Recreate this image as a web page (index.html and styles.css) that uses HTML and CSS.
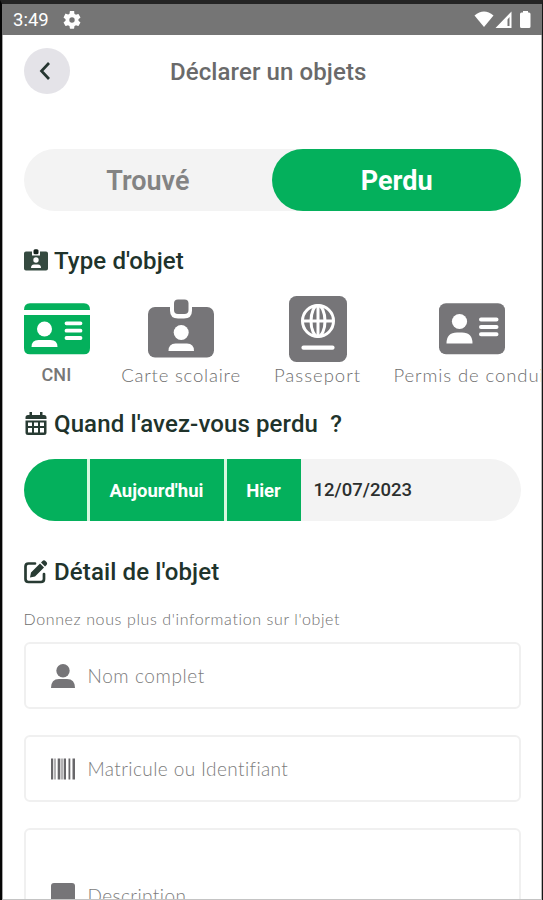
FILE: index.html
```html
<!DOCTYPE html>
<html lang="fr">
<head>
<meta charset="utf-8">
<title>Déclarer un objets</title>
<link rel="stylesheet" href="styles.css">
</head>
<body>
<div class="status">
  <span class="clock">3:49</span>
  <svg class="gear" viewBox="2 2 20 20"><path fill="#fff" fill-rule="evenodd" d="M19.14 12.94c.04-.3.06-.61.06-.94s-.02-.64-.07-.94l2.03-1.58a.49.49 0 0 0 .12-.61l-1.92-3.32a.49.49 0 0 0-.59-.22l-2.39.96a7 7 0 0 0-1.62-.94l-.36-2.54A.48.48 0 0 0 13.92 2h-3.84a.48.48 0 0 0-.47.41l-.36 2.54c-.59.24-1.13.57-1.62.94l-2.39-.96a.48.48 0 0 0-.59.22L2.74 8.87a.48.48 0 0 0 .12.61l2.03 1.58c-.05.3-.09.63-.09.94s.02.64.07.94l-2.03 1.58a.49.49 0 0 0-.12.61l1.92 3.32c.12.22.37.29.59.22l2.39-.96c.5.38 1.03.7 1.62.94l.36 2.54c.05.24.24.41.48.41h3.84c.24 0 .44-.17.47-.41l.36-2.54a7 7 0 0 0 1.62-.94l2.39.96c.22.08.47 0 .59-.22l1.92-3.32a.48.48 0 0 0-.12-.61zM12 15a3 3 0 1 1 0-6 3 3 0 0 1 0 6z"/></svg>
  <svg class="signals" viewBox="0 0 60 20"><g fill="#fff"><path d="M.5 5.500Q10 -2.500 19.500 5.500L10 17Z"/><path fill-rule="evenodd" d="M21.500 18 37.500 1.500V18ZM33.500 9.500V16H35.500V7Z"/><path d="M49 2.500V1h5v1.500h1q1.500 0 1.500 1.500v12.500q0 1.500-1.500 1.500h-7.500q-1.500 0-1.500-1.500V4q0-1.500 1.500-1.500Z"/></g></svg>
</div>
<main class="screen">
  <header class="header">
    <button class="back" aria-label="Retour"><svg viewBox="0 0 12 20"><path d="M10 2 2.500 10 10 18" fill="none" stroke="#253530" stroke-width="2.700"/></svg></button>
    <h1 class="title">Déclarer un objets</h1>
  </header>
  <div class="tabs"><div class="tab">Trouvé</div><div class="tab active">Perdu</div></div>

  <h2 class="heading first">
    <svg viewBox="0 0 24 22"><path fill="#354a40" d="M2 1.500H8V5.500H16V1.500H22Q24 1.500 24 3.500V18.500Q24 20.500 22 20.500H2Q0 20.500 0 18.500V3.500Q0 1.500 2 1.500Z"/><rect x="9.500" y="-.8" width="5" height="5" rx="1.500" fill="#15231c"/><circle cx="12" cy="10" r="2.700" fill="#fff"/><path fill="#fff" d="M7 18Q7 14.500 10 14.500H14Q17 14.500 17 18Z"/></svg>
    <span class="h-type">Type d'objet</span>
  </h2>
  <div class="types">
    <div class="type cni">
      <svg width="66" height="66" viewBox="0 0 66 66"><path fill="#04b05c" d="M0 14Q0 7.300 6 7.300H60Q66 7.300 66 14Z"/><path fill="#04b05c" d="M0 19H66V52Q66 58.300 60 58.300H6Q0 58.300 0 52Z"/><circle cx="20.500" cy="33" r="7.500" fill="#fff"/><path fill="#fff" d="M7.500 51Q7.500 44 14.500 44H26.500Q33.500 44 33.500 51Z"/><path stroke="#fff" stroke-width="3.800" stroke-linecap="round" d="M42.500 27.300H56.500M42.500 34.700H56.500M42.500 42H56.500"/></svg>
      <span class="label bold">CNI</span>
    </div>
    <div class="type carte">
      <svg width="66" height="66" viewBox="0 0 66 66"><rect y="11" width="66" height="50.500" rx="7" fill="#767578"/><path fill="#fff" d="M22 10H44V14.500Q44 22.500 36 22.500H30Q22 22.500 22 14.500Z"/><rect x="26" y="3.500" width="14.500" height="14.500" rx="4" fill="#767578"/><circle cx="33.200" cy="36.500" r="7.500" fill="#fff"/><path fill="#fff" d="M20.500 55Q20.500 47.500 27.500 47.500H39Q46 47.500 46 55Z"/></svg>
      <span class="label">Carte scolaire</span>
    </div>
    <div class="type passeport">
      <svg width="58" height="66" viewBox="0 0 58 66"><rect width="58" height="66" rx="7.500" fill="#767578"/><g fill="none" stroke="#fff" stroke-width="3"><circle cx="29" cy="25" r="15.500"/><ellipse cx="29" cy="25" rx="7" ry="15.500"/><path d="M29 9.500V40.500M13.500 25H44.500"/></g><path stroke="#fff" stroke-width="4.200" stroke-linecap="round" d="M14.500 51.700H43.500"/></svg>
      <span class="label">Passeport</span>
    </div>
    <div class="type permis">
      <svg width="66" height="66" viewBox="0 0 66 66"><rect y="7.300" width="66" height="51" rx="7" fill="#767578"/><circle cx="20.500" cy="25.500" r="7.600" fill="#fff"/><path fill="#fff" d="M7.500 47.500Q7.500 36.500 18 36.500H23Q33.500 36.500 33.500 47.500Z"/><path stroke="#fff" stroke-width="4" stroke-linecap="round" d="M42 23.500H57.500M42 31H57.500M42 38.300H57.500"/></svg>
      <span class="label">Permis de conduire</span>
    </div>
  </div>

  <h2 class="heading when">
    <svg viewBox="0 0 24 24"><path fill="#283b33" fill-rule="evenodd" d="M5.500 -.5H8V3H16V-.5H18.500V3H20Q22.500 3 22.500 5.500V7H1.500V5.500Q1.500 3 4 3H5.500ZM1.500 8.500H22.500V20.500Q22.500 23 20 23H4Q1.500 23 1.500 20.500ZM4 10.500V14H8V10.500ZM10 10.500V14H14V10.500ZM16 10.500V14H20V10.500ZM4 16V20.500H8V16ZM10 16V20.500H14V16ZM16 16V20.500H20V16Z"/></svg>
    <span class="h-when">Quand l'avez-vous perdu&nbsp; ?</span>
  </h2>
  <div class="dates"><div class="day blank"></div><div class="day today">Aujourd'hui</div><div class="day yesterday">Hier</div><div class="date">12/07/2023</div></div>

  <h2 class="heading detail">
    <svg viewBox="0 0 24 24"><path d="M11 3.500H4.500Q1.500 3.500 1.500 6.500V19Q1.500 22 4.500 22H17Q20 22 20 19V14" fill="none" stroke="#283b33" stroke-width="2.700" stroke-linecap="round"/><path fill="#283b33" d="M7 12.500 16 3.500 20 7.500 11 16.500 6 17.500ZM17 2.500 18.500 1Q20 -.5 22 1.500T22.500 5L21 6.500Z"/></svg>
    <span class="h-detail">Détail de l'objet</span>
  </h2>
  <p class="hint">Donnez nous plus d'information sur l'objet</p>
  <div class="field">
    <svg viewBox="0 0 24 24"><circle cx="12" cy="6.800" r="6.700" fill="#767578"/><path fill="#767578" d="M0 24Q0 15 8 15H16Q24 15 24 24Z"/></svg>
    <span class="nom">Nom complet</span>
  </div>
  <div class="field">
    <svg viewBox="0 0 24 24"><path fill="#68676a" d="M0 1.500H2.200V22.500H0ZM3.500 1.500H4.500V22.500H3.500ZM6.700 1.500H9.300V22.500H6.700ZM10.500 1.500H11.500V22.500H10.500ZM12.700 1.500H15V22.500H12.700ZM17.500 1.500H19.300V22.500H17.500ZM21.500 1.500H24V22.500H21.500Z"/></svg>
    <span class="matricule">Matricule ou Identifiant</span>
  </div>
  <div class="field area">
    <svg viewBox="0 0 24 24"><path fill="#767578" d="M3 0H21Q24 0 24 3V21Q24 24 21 24H3Q0 24 0 21V3Q0 0 3 0Z"/></svg>
    <span class="description">Description</span>
  </div>
</main>
</body>
</html>
```
FILE: styles.css
```css
* { box-sizing: border-box; }
html, body { margin: 0; height: 900px; overflow: hidden; }
body {
  width: 543px;
  border-top: 4px solid #242424;
  border-left: 2px solid #050505;
  border-right: 1px solid #161616;
  background: #fff;
  font-family: Roboto, sans-serif;
  color: #20332b;
}
.status {
  height: 31px;
  display: flex;
  align-items: center;
  padding: 0 8px 0 11px;
  background: #757575;
  color: #fff;
}
.clock { width: 50px; font-size: 18.500px; line-height: 31px; padding-top: 2px; }
.gear { width: 18px; height: 18px; }
.signals { width: 60px; height: 20px; margin-left: auto; }
.screen {
  height: 865px;
  overflow: hidden;
  padding: 13px 20px 0 20.500px;
  border-left: 1px solid #a5a5a5;
  border-right: 1px solid #b8b8b8;
  border-bottom: 1px solid #c4c4c4;
}
.header { display: flex; align-items: center; height: 46px; }
.back {
  display: flex;
  align-items: center;
  justify-content: center;
  width: 46px;
  height: 46px;
  padding: 0 3px 0 0;
  border: 0;
  border-radius: 50%;
  background: #e4e3e8;
}
.back svg { width: 12px; height: 20px; }
.title { margin: 2px 0 0 100.500px; font-size: 24px; font-weight: 500; letter-spacing: .1px; color: #6a6a6a; white-space: nowrap; }
.tabs { display: flex; height: 62px; margin-top: 55px; border-radius: 31px; background: #f3f3f3; }
.tab { flex: 1; text-align: center; font-size: 27px; line-height: 64px; font-weight: 600; color: #838383; }
.tab.active { border-radius: 31px; background: #04b05c; color: #fff; font-weight: 700; }
.heading { display: flex; align-items: center; height: 30px; margin: 0; font-size: 24px; font-weight: 500; letter-spacing: .12px; white-space: nowrap; }
.heading svg { width: 24px; height: 24px; margin-right: 6.500px; }
.first { margin-top: 35px; }
.types { display: flex; gap: 31px; height: 92px; margin-top: 20px; }
.type { display: flex; flex: none; flex-direction: column; align-items: center; }
.type svg { flex: none; }
.cni { width: 66px; }
.carte { width: 121px; }
.passeport { width: 90px; }
.permis { width: 157px; }
.label, .hint, .field { font-family: Lato, sans-serif; font-weight: 300; color: #6e6e6e; white-space: nowrap; }
.label { font-size: 18.500px; line-height: 26px; letter-spacing: .8px; }
.passeport .label { letter-spacing: 1px; }
.permis .label { align-self: flex-start; letter-spacing: .9px; }
.label.bold { font-family: Roboto, sans-serif; font-weight: 500; font-size: 18px; letter-spacing: .2px; color: #777; }
.when { margin-top: 21px; }
.dates { display: flex; gap: 3px; height: 62px; margin-top: 20px; overflow: hidden; border-radius: 31px; background: #f3f3f3; }
.day { background: #04b05c; color: #fff; text-align: center; font-size: 18.500px; line-height: 64px; font-weight: 700; box-shadow: 3px 0 #d9f7df; }
.blank { width: 63px; }
.today { width: 134px; }
.yesterday { width: 74px; box-shadow: none; }
.date { margin-left: 10px; font-size: 18.500px; line-height: 63px; color: #2b2f2e; font-weight: 500; }
.detail { margin-top: 36px; }
.hint { height: 24px; margin: 20px 0 11px; font-size: 16px; line-height: 24px; letter-spacing: .62px; }
.field { display: flex; align-items: center; height: 67px; margin-bottom: 26px; padding-left: 25.500px; border: 2px solid #f0f0f0; border-radius: 6px; font-size: 19px; letter-spacing: .4px; color: #7c7c7c; }
.field svg { width: 24px; height: 24px; margin-right: 12.500px; }
.nom { letter-spacing: .6px; }
.area { height: 134px; }
```
